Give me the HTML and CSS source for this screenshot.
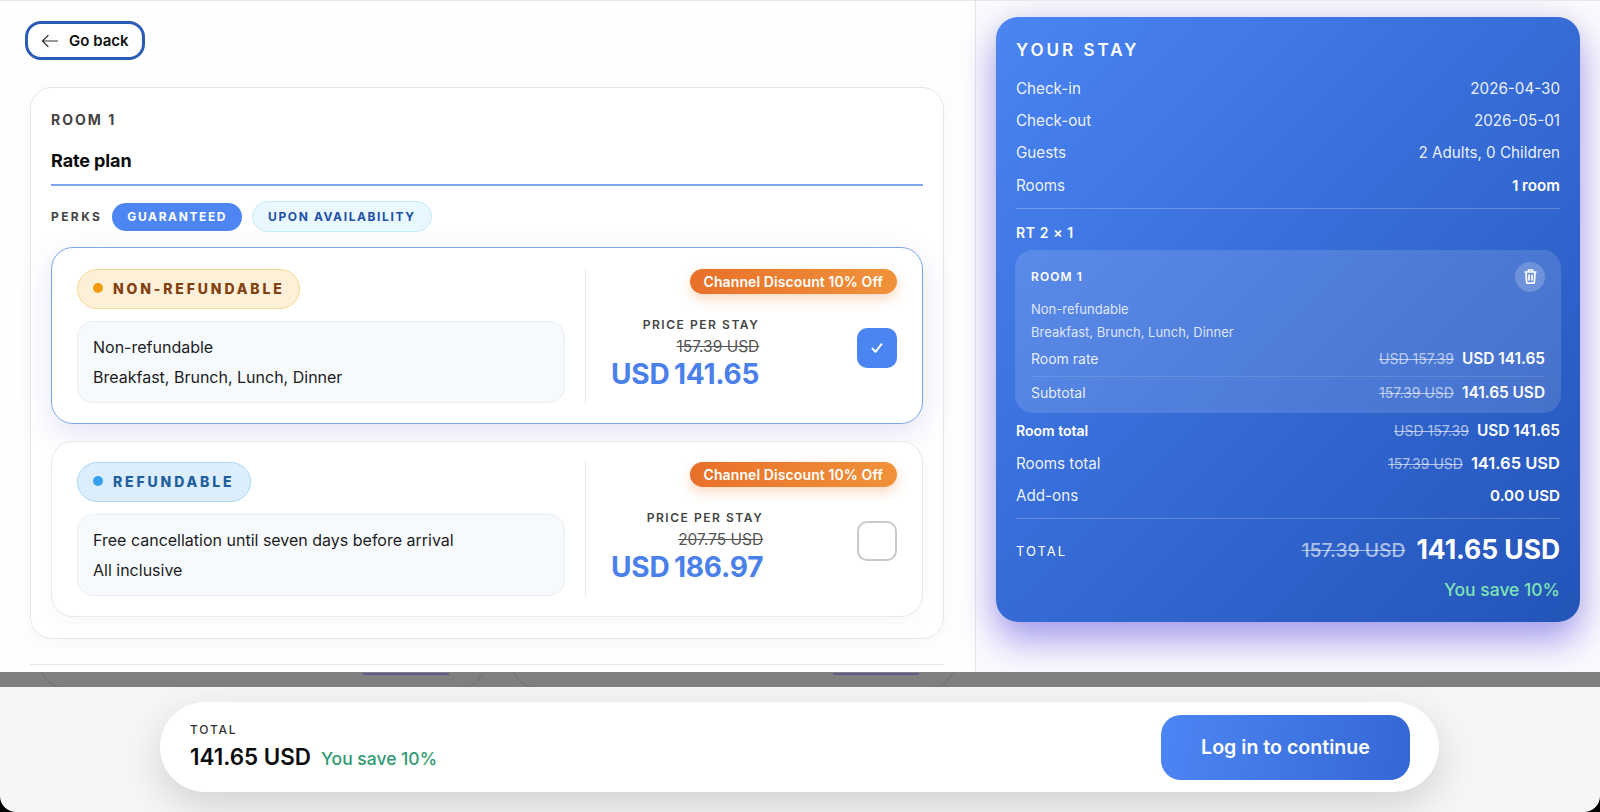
FILE: index.html
```html
<!DOCTYPE html>
<html lang="en">
<head>
<meta charset="utf-8">
<title>Your stay</title>
<link rel="stylesheet" href="styles.css">
</head>
<body>
<div class="shell">
  <main class="main">
    <section class="left">
      <button class="back">
        <svg width="18" height="14" viewBox="0 0 18 14" fill="none" stroke="#333" stroke-width="1.2" stroke-linecap="round" stroke-linejoin="round"><path d="M16.5 7H1.5M7 1.5 1.5 7 7 12.5"/></svg>
        <span>Go back</span>
      </button>
      <div class="room-card">
        <div class="room-label">ROOM 1</div>
        <h2 class="room-title">Rate plan</h2>
        <div class="perks">
          <span class="perks-label">PERKS</span>
          <span class="perk perk-on">GUARANTEED</span>
          <span class="perk perk-off">UPON AVAILABILITY</span>
        </div>
        <div class="rate rate-selected">
          <div class="rate-info">
            <div class="chip chip-amber"><i class="dot"></i>NON-REFUNDABLE</div>
            <div class="info-box"><p>Non-refundable</p><p>Breakfast, Brunch, Lunch, Dinner</p></div>
          </div>
          <div class="rate-price">
            <div class="discount">Channel Discount 10% Off</div>
            <div class="price-row">
              <div class="price-block">
                <div class="price-label">PRICE PER STAY</div>
                <div class="price-old">157.39 USD</div>
                <div class="price-new">USD 141.65</div>
              </div>
              <div class="check check-on">
                <svg width="14" height="14" viewBox="0 0 14 14" fill="none" stroke="#fff" stroke-width="2" stroke-linecap="round" stroke-linejoin="round"><path d="M2.5 7.5 5.5 10.8 11.5 3.2"/></svg>
              </div>
            </div>
          </div>
        </div>
        <div class="rate">
          <div class="rate-info">
            <div class="chip chip-blue"><i class="dot"></i>REFUNDABLE</div>
            <div class="info-box"><p>Free cancellation until seven days before arrival</p><p>All inclusive</p></div>
          </div>
          <div class="rate-price">
            <div class="discount">Channel Discount 10% Off</div>
            <div class="price-row">
              <div class="price-block">
                <div class="price-label">PRICE PER STAY</div>
                <div class="price-old">207.75 USD</div>
                <div class="price-new">USD 186.97</div>
              </div>
              <div class="check"></div>
            </div>
          </div>
        </div>
      </div>
      <div class="next-line"></div>
    </section>
    <aside class="right">
      <div class="stay">
        <h2 class="stay-title">YOUR STAY</h2>
        <div class="row"><span>Check-in</span><span>2026-04-30</span></div>
        <div class="row"><span>Check-out</span><span>2026-05-01</span></div>
        <div class="row"><span>Guests</span><span>2 Adults, 0 Children</span></div>
        <div class="row"><span>Rooms</span><b>1 room</b></div>
        <div class="rule rule-a"></div>
        <div class="rt">RT 2 × 1</div>
        <div class="box">
          <div class="box-head">
            <span>ROOM 1</span>
            <span class="trash">
              <svg width="13" height="15" viewBox="0 0 13 15" fill="none" stroke="#fff" stroke-width="1.7"><path d="M.5 3h12M4.5 3V1h4v2M2 3l.6 10.2c0 .5.4.9.9.9h6c.5 0 .9-.4.9-.9L11 3M5 5.5v6M8 5.5v6"/></svg>
            </span>
          </div>
          <div class="box-line box-line-first">Non-refundable</div>
          <div class="box-line">Breakfast, Brunch, Lunch, Dinner</div>
          <div class="row row-sm row-rate"><span>Room rate</span><span class="amt"><s>USD 157.39</s><b>USD 141.65</b></span></div>
          <div class="row row-sm row-sub"><span>Subtotal</span><span class="amt"><s>157.39 USD</s><b>141.65 USD</b></span></div>
        </div>
        <div class="row row-room"><b>Room total</b><span class="amt"><s>USD 157.39</s><b>USD 141.65</b></span></div>
        <div class="row"><span>Rooms total</span><span class="amt"><s>157.39 USD</s><b>141.65 USD</b></span></div>
        <div class="row"><span>Add-ons</span><b>0.00 USD</b></div>
        <div class="rule rule-b"></div>
        <div class="total-row"><span class="total-label">TOTAL</span><span class="total-amt"><s>157.39 USD</s><b>141.65 USD</b></span></div>
        <div class="save">You save 10%</div>
      </div>
    </aside>
  </main>
  <div class="scrim">
    <div class="ghost ghost-a"><i></i></div>
    <div class="ghost ghost-b"><i></i></div>
  </div>
  <footer class="footer">
    <div class="pill">
      <div class="pill-text">
        <div class="pill-label">TOTAL</div>
        <div class="pill-price"><strong>141.65 USD</strong><span>You save 10%</span></div>
      </div>
      <button class="cta">Log in to continue</button>
    </div>
  </footer>
</div>
</body>
</html>
```
FILE: styles.css
```css
* { box-sizing: border-box; }
html, body { margin: 0; padding: 0; background: #000; }
body { font-family: Inter, "Liberation Sans", sans-serif; color: #111; }
.shell { width: 1600px; height: 812px; display: flex; flex-direction: column; overflow: hidden; }
.main { height: 672px; display: flex; background: #fff; border-top: 1px solid #e8e8ec; overflow: hidden; }
.left { width: 976px; padding: 20px 31px 0 30px; border-right: 1px solid #e6e6ea; background: #fefefe; }
.back { margin-left: -5px; width: 120px; height: 39px; display: flex; align-items: center; gap: 10px; padding: 0 0 0 13px; background: #fff; border: 3px solid #2a5cb6; border-radius: 16px; font: 600 15px Inter, sans-serif; color: #111; }
.room-card { margin-top: 27px; background: #fff; border: 1px solid #e6e7ea; border-radius: 22px; padding: 22px 20px 21px; box-shadow: 0 4px 20px rgba(30, 40, 80, .03); }
.room-label { font-size: 14px; line-height: 20px; font-weight: 700; letter-spacing: 2px; color: #444; }
.room-title { margin: 19px 0 0; font-size: 18px; line-height: 24px; font-weight: 700; letter-spacing: -.1px; color: #0c0c0e; padding-bottom: 11px; border-bottom: 2px solid #7ea6f0; }
.perks { margin-top: 15px; display: flex; align-items: center; height: 31px; }
.perks-label { font-size: 12px; font-weight: 700; letter-spacing: 2.4px; color: #444; margin-right: 10px; }
.perk { font-size: 12px; font-weight: 700; letter-spacing: 1.6px; border-radius: 16px; display: flex; align-items: center; }
.perk-on { height: 28px; padding: 0 15px; background: #4d86f3; color: #fff; margin-right: 10px; }
.perk-off { height: 31px; padding: 0 15px; background: #e8f8fe; border: 1px solid #c3ebf8; color: #1f4fa8; }
.rate { margin-top: 17px; height: 176px; display: flex; padding: 20px 25px 0; background: #fff; border: 1px solid #e8e9ec; border-radius: 22px; box-shadow: 0 6px 20px rgba(30, 40, 80, .03); }
.rate-selected { margin-top: 15px; height: 177px; padding-top: 21px; border: 1.5px solid #7ea6f0; box-shadow: 0 10px 30px rgba(90, 90, 220, .16); }
.rate-info { width: 488px; margin-right: 20px; }
.chip { display: inline-flex; align-items: center; height: 40px; padding: 0 16px 2px 15px; border-radius: 20px; font-size: 14px; font-weight: 800; letter-spacing: 2.85px; }
.dot { width: 10px; height: 10px; border-radius: 50%; margin-right: 10px; }
.chip-amber { padding-right: 14px; background: #fdf0d8; border: 1px solid #f8d98f; color: #83400f; }
.chip-amber .dot { background: #f19c10; }
.chip-blue { background: #dcedfc; border: 1px solid #a9d8f7; color: #1f5fa0; }
.chip-blue .dot { background: #36a0f0; }
.info-box { margin-top: 12px; height: 82px; padding: 10px 15px; background: #f7fafd; border: 1px solid #e9edf1; border-radius: 16px; }
.info-box p { margin: 0; font-size: 16px; line-height: 30px; color: #1c1c1e; }
.rate-price { flex: 1; display: flex; flex-direction: column; height: 135px; border-left: 1px solid #e6e8ec; padding-left: 25px; }
.discount { align-self: flex-end; height: 25px; padding: 0 14px; display: flex; align-items: center; border-radius: 13px; background: linear-gradient(90deg, #e8702a, #f0923a); color: #fff; font-size: 14px; font-weight: 600; letter-spacing: .1px; box-shadow: 0 5px 12px rgba(240, 130, 50, .3); }
.price-row { flex: 1; display: flex; align-items: center; justify-content: space-between; }
.price-block { text-align: right; margin-top: 8px; }
.price-label { font-size: 12px; line-height: 16px; font-weight: 600; letter-spacing: 1.55px; color: #444; }
.price-old { margin-top: 4px; font-size: 15.5px; line-height: 20px; color: #555; text-decoration: line-through; }
.price-new { margin-top: 2px; font-size: 28px; line-height: 30px; font-weight: 700; color: #4a80ea; letter-spacing: -.2px; word-spacing: -2px; }
.check { width: 40px; height: 40px; margin-top: -2px; border-radius: 10px; border: 2.5px solid #c8c9cd; background: #fff; display: flex; align-items: center; justify-content: center; }
.check-on { background: #4a85f2; border: 0; }
.next-line { margin-top: 25px; border-top: 1px solid #e6e7ea; }
.right { flex: 1; padding: 16px 20px 0; background: #fbfbfe; }
.stay { height: 605px; padding: 22px 20px 0; border-radius: 22px; color: #fff; background: linear-gradient(135deg, #4a85f2 0%, #3a70dc 40%, #2354b8 100%); box-shadow: 0 20px 36px rgba(80, 60, 225, .45), 0 0 30px rgba(60, 60, 130, .12); }
.stay-title { margin: 0 0 11px; font-size: 17px; line-height: 22px; font-weight: 600; letter-spacing: 3px; }
.row { height: 32.4px; display: flex; align-items: center; justify-content: space-between; font-size: 15.2px; color: rgba(255, 255, 255, .92); }
.row b { font-weight: 600; color: #fff; }
.rule { height: 1px; background: rgba(255, 255, 255, .22); }
.rule-a { margin-top: 6px; }
.rule-b { margin-top: 6px; }
.rt { margin-top: 14px; font-size: 14px; line-height: 20px; font-weight: 600; letter-spacing: .6px; }
.box { margin: 7px -1px 0; height: 163px; padding: 12px 16px 0; border-radius: 18px; background: rgba(255, 255, 255, .13); }
.box-head { height: 30px; display: flex; align-items: center; justify-content: space-between; font-size: 12px; font-weight: 600; letter-spacing: 1.1px; }
.trash { width: 30px; height: 30px; border-radius: 50%; background: rgba(255, 255, 255, .2); display: flex; align-items: center; justify-content: center; }
.box-line { font-size: 13px; line-height: 23px; color: rgba(255, 255, 255, .82); }
.box-line-first { margin-top: 6px; }
.row-sm { font-size: 14px; color: rgba(255, 255, 255, .88); }
.row-rate { height: 29px; }
.row-sub { height: 31px; margin-top: 3px; border-top: 1px solid rgba(255, 255, 255, .12); padding-top: 1px; }
.row-room { margin-top: 2px; font-size: 14px; }
.amt { display: flex; align-items: center; gap: 8px; font-size: 16.5px; }
.row-sm .amt, .row-room .amt { font-size: 15.4px; }
.amt s { font-size: 14px; color: rgba(255, 255, 255, .62); }
.row .amt b { font-weight: 600; }
.total-row { margin-top: 12px; height: 36px; display: flex; align-items: center; justify-content: space-between; }
.total-label { font-size: 13px; letter-spacing: 2px; margin-top: 4px; }
.total-amt { display: flex; align-items: center; gap: 11px; }
.total-amt s { font-size: 19.3px; font-weight: 500; color: rgba(255, 255, 255, .6); margin-top: 3px; }
.total-amt b { font-size: 26.4px; font-weight: 700; }
.save { margin-top: 11px; text-align: right; font-size: 17.5px; line-height: 24px; font-weight: 500; color: #7fe3b4; }
.scrim { height: 15px; flex: none; background: #808080; overflow: hidden; display: flex; padding: 0 0 0 40px; }
.ghost { height: 24px; margin-top: -8px; padding: 8px 35px 0 0; border: 1px solid #747474; border-radius: 0 0 24px 24px; display: flex; justify-content: flex-end; }
.ghost-a { width: 445px; margin-right: 27px; }
.ghost-b { width: 443px; }
.ghost i { width: 86px; height: 1.5px; background: #5d5d8c; display: block; }
.footer { height: 125px; flex: none; padding: 15px 161px 0 160px; background: #f6f6f7; border-radius: 0 0 16px 16px; }
.pill { height: 90px; display: flex; align-items: center; justify-content: space-between; padding: 0 29px 0 30px; background: #fff; border-radius: 45px; box-shadow: 0 14px 40px rgba(0, 0, 0, .15); }
.pill-text { margin-top: -2px; }
.pill-label { font-size: 12px; line-height: 16px; font-weight: 500; letter-spacing: 1.8px; color: #333; }
.pill-price { margin-top: 5px; display: flex; align-items: baseline; gap: 10px; }
.pill-price strong { font-size: 22.4px; line-height: 28px; font-weight: 600; color: #0c0c0e; }
.pill-price span { font-size: 17.5px; font-weight: 500; color: #2f9a72; }
.cta { width: 249px; height: 65px; border: 0; border-radius: 20px; color: #fff; font: 600 19.6px Inter, sans-serif; background: linear-gradient(100deg, #4c86f4, #3467d4); }
```
